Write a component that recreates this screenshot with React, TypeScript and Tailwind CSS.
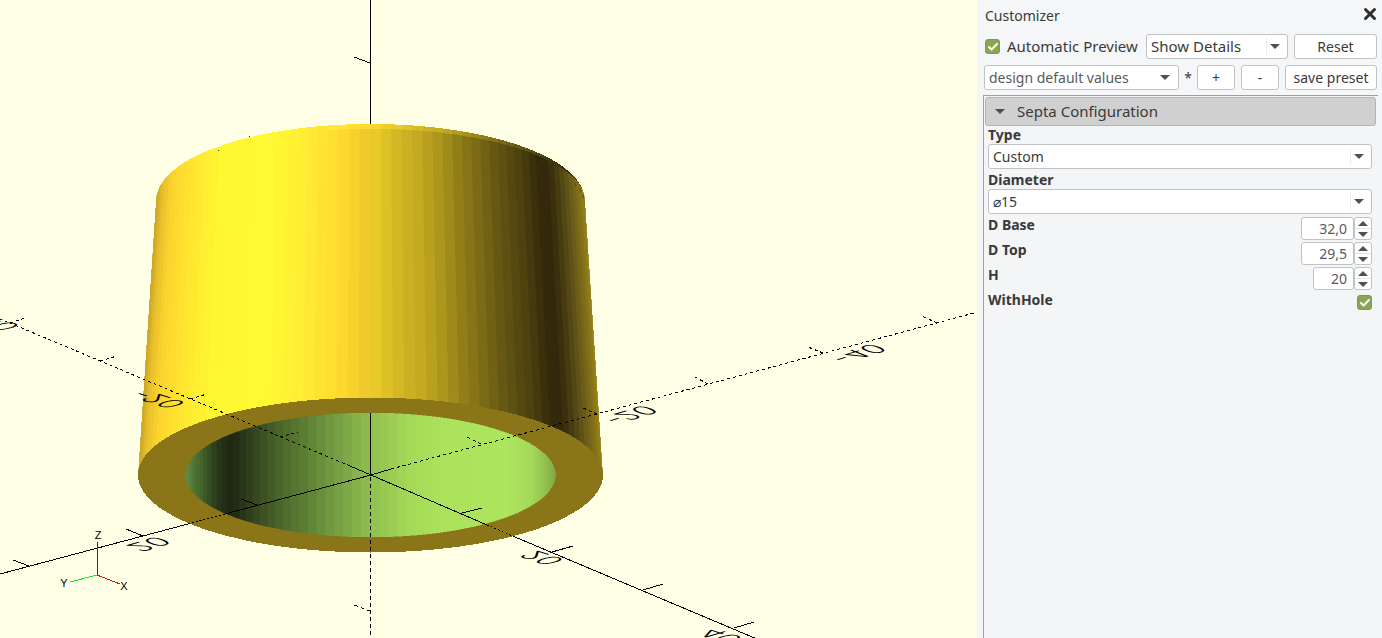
import { useState } from 'react';
import type { ReactNode } from 'react';
import { Check, X } from 'lucide-react';

type Stop = [number, string];

const OUTER_STOPS: Stop[] = [
  [157, '#c9a426'], [163, '#e6be2b'], [173, '#fbd32d'], [190, '#ffe22f'], [222, '#fff732'],
  [275, '#fff832'], [300, '#fff034'], [330, '#ffe030'], [350, '#fcd62f'], [362, '#f0cc2b'],
  [378, '#e6c828'], [400, '#d0b425'], [420, '#c2a820'], [440, '#aa941b'], [460, '#8e7b19'],
  [480, '#766615'], [500, '#5e5213'], [520, '#4c410f'], [532, '#3c310c'], [542, '#30260b'],
  [549, '#352b0c'], [558, '#4a3f10'], [568, '#645619'], [578, '#827018'], [585, '#9a8219'],
];

const INNER_STOPS: Stop[] = [
  [185, '#64904a'], [195, '#4f7335'], [207, '#3a5425'], [220, '#263419'], [232, '#1c2510'],
  [243, '#28351a'], [262, '#3b4f22'], [282, '#4c682a'], [303, '#5a7c33'], [330, '#6f9840'],
  [350, '#7fab47'], [370, '#8fbe4e'], [388, '#9acb53'], [410, '#a5d958'], [440, '#abe15b'],
  [505, '#aee55e'], [530, '#a5da59'], [545, '#93c250'], [556, '#7fa845'],
];

const CX = 370.5;
const FACETS = 64;

function channel(hex: string, i: number) {
  return parseInt(hex.slice(1 + i * 2, 3 + i * 2), 16);
}

function shade(stops: Stop[], x: number) {
  const next = stops.findIndex(([pos]) => pos >= x);
  if (next <= 0) return next === 0 ? stops[0][1] : stops[stops.length - 1][1];
  const [x0, c0] = stops[next - 1];
  const [x1, c1] = stops[next];
  const t = (x - x0) / (x1 - x0);
  const rgb = [0, 1, 2].map((i) => Math.round(channel(c0, i) * (1 - t) + channel(c1, i) * t));
  return `rgb(${rgb.join(',')})`;
}

const angles = Array.from({ length: FACETS }, (_, i) => [
  Math.PI - (i * Math.PI) / FACETS,
  Math.PI - ((i + 1) * Math.PI) / FACETS,
]);

function rim(angle: number, cy: number, rx: number, ry: number) {
  return `${(CX + rx * Math.cos(angle)).toFixed(2)},${(cy - ry * Math.sin(angle)).toFixed(2)}`;
}

function Wall() {
  return (
    <g>
      {angles.map(([a, b], i) => {
        const x = CX + 214 * Math.cos((a + b) / 2);
        const fill = shade(OUTER_STOPS, x);
        return (
          <g key={i}>
            {/* chamfer on the far edge, lit as if turned towards the light */}
            <polygon
              fill={shade(OUTER_STOPS, x > 330 ? x - 25 : x)}
              points={`${rim(a, 200, 214, 76)} ${rim(b, 200, 214, 76)} ${rim(b, 206, 214, 70)} ${rim(a, 206, 214, 70)}`}
            />
            <polygon
              fill={fill}
              stroke={fill}
              strokeWidth={0.5}
              points={`${rim(a, 200, 214, 71)} ${rim(b, 200, 214, 71)} ${rim(b, 475, 232, 77)} ${rim(a, 475, 232, 77)}`}
            />
          </g>
        );
      })}
    </g>
  );
}

function Bore() {
  return (
    <g>
      {angles.map(([a, b], i) => {
        const fill = shade(INNER_STOPS, CX + 185 * Math.cos((a + b) / 2));
        return (
          <polygon
            key={i}
            fill={fill}
            stroke={fill}
            strokeWidth={0.5}
            points={`${rim(a, 475, 185, 62)} ${rim(b, 475, 185, 62)} ${rim(-b, 475, 185, 62)} ${rim(-a, 475, 185, 62)}`}
          />
        );
      })}
    </g>
  );
}

// The numbers lie in the ground plane and are seen from below, hence mirrored.
const axisLabels = [
  { text: '-20', at: 'matrix(2.7 -0.8 -2.3 -0.9 600 418)' },
  { text: '-40', at: 'matrix(2.7 -0.8 -2.3 -0.9 827 357)' },
  { text: '20', at: 'matrix(2.7 -0.8 -2.3 -0.9 124 546)' },
  { text: '-20', at: 'matrix(2.5 0.8 2.7 -0.8 147 390)' },
  { text: '-40', at: 'matrix(2.5 0.8 2.7 -0.8 -20 312)' },
  { text: '20', at: 'matrix(2.5 0.8 2.7 -0.8 536 550)' },
  { text: '40', at: 'matrix(2.5 0.8 2.7 -0.8 714 628)' },
];

function Viewport() {
  return (
    <svg
      viewBox="0 0 977 638"
      preserveAspectRatio="xMidYMid slice"
      className="block h-full w-full bg-[#ffffe5]"
      role="img"
      aria-label="3D view"
    >
      <g shapeRendering="crispEdges">
        <Wall />
        <ellipse cx={CX} cy={475} rx={232.5} ry={77.5} fill="#8a7518" />
        <Bore />
        <path d="M218 150h1v1h-1zM249 136h1v1h-1z" fill="#3a300c" />

        <g stroke="#000" fill="none">
          <path d="M370.500 0V124M354 57L370 63M370.500 413V475" />
          <path d="M0 574L188 524M225 514L371 475L391 469" />
          <path d="M350 466L371 475L487 525M515 537L757 639" />
          <path d="M13 560L29 566M126 529L143 536M241 499L257 505" />
          <path d="M462 513L482 508M552 552L573 546M643 590L663 584M734 628L754 622" />
        </g>
        <g stroke="#000" fill="none" strokeDasharray="3 3">
          <path d="M391 469L974 313" />
          <path d="M350 466L5 321" />
          <path d="M481 444L467 437M597 414L581 407M708 384L695 377M823 353L808 347M937 323L922 316" />
          <path d="M280 437L298 432M190 399L207 394M100 361L117 356M10 323L25 318" />
        </g>
        <path d="M370.500 477V636M354 605L370 611" stroke="#000" strokeDasharray="4 3" />
        <path d="M188 524L225 514M487 525L515 537" stroke="#000" strokeDasharray="2 2" />

        <path d="M97.500 575V542" stroke="#2020c8" />
        <path d="M97 575L120 584" stroke="#d01818" />
        <path d="M97 575L70 582" stroke="#25e03a" />
      </g>

      <g className="font-['Inter','Liberation_Sans',sans-serif] text-[10px] font-light" fill="#000">
        {axisLabels.map((label, i) => (
          <text key={i} transform={label.at}>
            {label.text}
          </text>
        ))}
      </g>
      <g className="font-['Liberation_Sans',sans-serif] text-[11px]" fill="#000" textAnchor="middle">
        <text x={98} y={539}>Z</text>
        <text x={64} y={587}>Y</text>
        <text x={124} y={590}>X</text>
      </g>
    </svg>
  );
}

function Arrow({ up = false }: { up?: boolean }) {
  return (
    <svg viewBox="0 0 10 5" className="h-[5px] w-[10px]" aria-hidden="true">
      <path d={up ? 'M0 5L5 0L10 5Z' : 'M0 0L5 5L10 0Z'} fill="#505050" />
    </svg>
  );
}

const control = 'rounded-[3px] border border-[#bfc3c6] bg-white';

type DropDownProps = {
  label: string;
  options: string[];
  id?: string;
  className?: string;
  divider?: boolean;
};

function DropDown({ label, options, id, className = '', divider = true }: DropDownProps) {
  return (
    <div className={`relative ${className}`}>
      <select
        id={id}
        aria-label={label}
        className={`${control} block h-[25px] w-full appearance-none pr-6 pl-1 outline-none`}
      >
        {options.map((option) => (
          <option key={option}>{option}</option>
        ))}
      </select>
      <span
        className={`pointer-events-none absolute inset-y-1 right-0 flex w-[22px] items-center pl-[3px] ${divider ? 'border-l border-[#ececec]' : ''}`}
      >
        <Arrow />
      </span>
    </div>
  );
}

function Tick({ id, className = '' }: { id: string; className?: string }) {
  const [checked, setChecked] = useState(true);
  return (
    <span className={`relative flex size-[15px] shrink-0 ${className}`}>
      <input
        id={id}
        type="checkbox"
        checked={checked}
        onChange={() => setChecked(!checked)}
        className="size-full appearance-none rounded-[3px] border border-[#7c9a4c] bg-white checked:bg-[#8aa654]"
      />
      {checked && (
        <Check className="pointer-events-none absolute inset-0 m-auto size-3 text-white" strokeWidth={4} />
      )}
    </span>
  );
}

type SpinnerProps = { id: string; label: string; start: number; step: number; digits: number; width: string };

function Spinner({ id, label, start, step, digits, width }: SpinnerProps) {
  const [value, setValue] = useState(start);
  const shown = value.toFixed(digits).replace('.', ',');
  return (
    <div className="flex h-[25px] items-start justify-between">
      <FieldLabel htmlFor={id}>{label}</FieldLabel>
      <div className="mt-px flex h-[23px]">
        <input
          id={id}
          value={shown}
          onChange={(e) => setValue(Number(e.target.value.replace(',', '.')) || 0)}
          className={`${control} ${width} pr-1.5 text-right text-[#5a5a5a] outline-none`}
        />
        <div className={`${control} flex w-[18px] flex-col divide-y divide-[#e4e4e4]`}>
          <button
            type="button"
            aria-label={`Increase ${label}`}
            onClick={() => setValue(value + step)}
            className="flex flex-1 items-center justify-center"
          >
            <Arrow up />
          </button>
          <button
            type="button"
            aria-label={`Decrease ${label}`}
            onClick={() => setValue(value - step)}
            className="flex flex-1 items-center justify-center"
          >
            <Arrow />
          </button>
        </div>
      </div>
    </div>
  );
}

function FieldLabel({ htmlFor, children }: { htmlFor: string; children: ReactNode }) {
  return (
    <label htmlFor={htmlFor} className="block h-[18px] leading-[18px] font-bold">
      {children}
    </label>
  );
}

function Customizer() {
  const [open, setOpen] = useState(true);

  return (
    <aside className="flex w-[405px] shrink-0 flex-col bg-[#f4f6f7] pl-[6px] font-['Noto_Sans','Open_Sans',sans-serif] text-sm text-[#3a3a3a]">
      <header className="flex h-[34px] items-center justify-between pr-[3px] pb-0.5 pl-0.5">
        <h1>Customizer</h1>
        <button type="button" aria-label="Close" className="mb-1">
          <X className="size-[18px] text-[#2e2e2e]" strokeWidth={4} />
        </button>
      </header>

      <div className="flex h-[25px] items-center pr-[5px] pl-0.5">
        <Tick id="preview" />
        <label htmlFor="preview" className="ml-[7px] flex-1 text-[15px] whitespace-nowrap">
          Automatic Preview
        </label>
        <DropDown
          label="Detail level"
          options={['Show Details', 'Inline Details', 'Hide Details', 'Description Only']}
          className="w-[142px] text-[15px]"
        />
        <button type="button" className={`${control} ml-1.5 h-[25px] w-[83px]`}>
          Reset
        </button>
      </div>

      <div className="mt-1.5 flex h-[25px] items-center pr-[5px] pl-px">
        <DropDown
          label="Preset"
          options={['design default values']}
          className="w-[195px] text-[#5a5a5a]"
          divider={false}
        />
        <span className="flex-1 text-center">*</span>
        <button type="button" className={`${control} h-[25px] w-[38px]`}>
          +
        </button>
        <button type="button" className={`${control} ml-1.5 h-[25px] w-[38px]`}>
          -
        </button>
        <button type="button" className={`${control} ml-1.5 h-[25px] w-[92px] whitespace-nowrap`}>
          save preset
        </button>
      </div>

      <section className="mt-[5px] mr-1 flex-1 border-t border-l border-[#9da0a2] bg-[#f3f5f7] pt-px pr-0.5 pl-px">
        <button
          type="button"
          aria-expanded={open}
          onClick={() => setOpen(!open)}
          className="flex h-[29px] w-full items-center gap-3 rounded-[3px] border border-[#b4b4b4] bg-[#d0d0d0] pl-[9px] text-[15px]"
        >
          <Arrow />
          Septa Configuration
        </button>

        {open && (
          <div className="pr-1 pl-[3px]">
            <FieldLabel htmlFor="type">Type</FieldLabel>
            <DropDown id="type" label="Type" options={['Custom', 'Standard']} className="mb-0.5" />
            <FieldLabel htmlFor="diameter">Diameter</FieldLabel>
            <DropDown id="diameter" label="Diameter" options={['⌀15', '⌀20', '⌀25']} className="mb-0.5" />
            <Spinner id="d-base" label="D Base" start={32} step={0.5} digits={1} width="w-[53px]" />
            <Spinner id="d-top" label="D Top" start={29.5} step={0.5} digits={1} width="w-[53px]" />
            <Spinner id="h" label="H" start={20} step={1} digits={0} width="w-[41px]" />
            <div className="flex h-[25px] items-start justify-between">
              <FieldLabel htmlFor="with-hole">WithHole</FieldLabel>
              <Tick id="with-hole" className="mt-1" />
            </div>
          </div>
        )}
      </section>
    </aside>
  );
}

export default function App() {
  return (
    <div className="flex h-screen w-full overflow-hidden bg-[#f4f6f7]">
      <main className="min-w-0 flex-1">
        <Viewport />
      </main>
      <Customizer />
    </div>
  );
}
